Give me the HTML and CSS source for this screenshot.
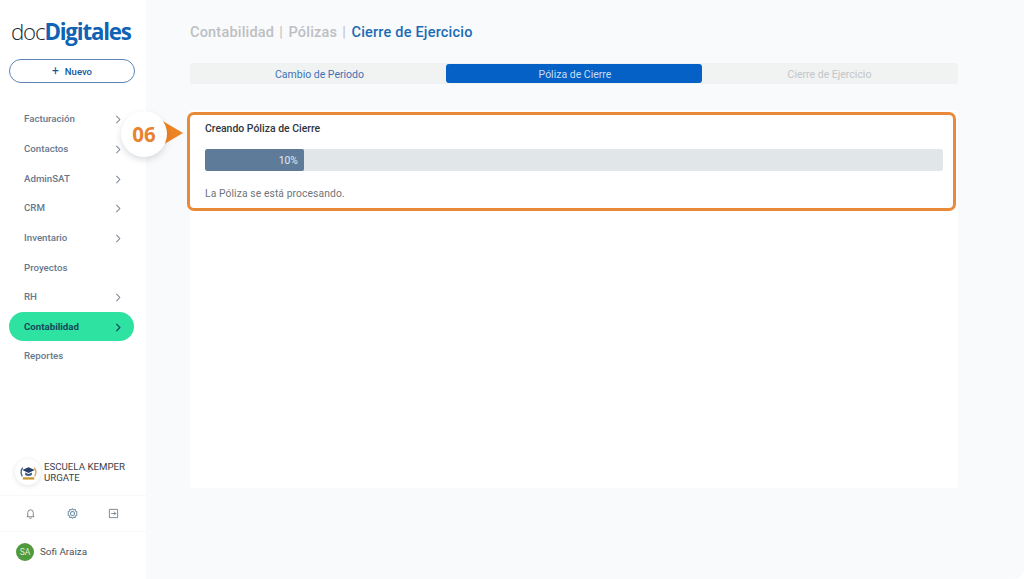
FILE: index.html
```html
<!DOCTYPE html>
<html lang="es">
<head>
<meta charset="utf-8">
<title>docDigitales</title>
<link rel="stylesheet" href="styles.css">
</head>
<body>
<div class="app">
  <aside class="sidebar">
    <div class="logo"><span class="logo-doc">doc</span><span class="logo-dig">Digitales</span></div>
    <button class="new-btn"><span class="plus">+</span>Nuevo</button>
    <nav class="nav">
      <a class="nav-item">Facturación<svg class="chev" viewBox="0 0 8 12"><path d="M2.200 2 6 6 2.200 10"/></svg></a>
      <a class="nav-item">Contactos<svg class="chev" viewBox="0 0 8 12"><path d="M2.200 2 6 6 2.200 10"/></svg></a>
      <a class="nav-item">AdminSAT<svg class="chev" viewBox="0 0 8 12"><path d="M2.200 2 6 6 2.200 10"/></svg></a>
      <a class="nav-item">CRM<svg class="chev" viewBox="0 0 8 12"><path d="M2.200 2 6 6 2.200 10"/></svg></a>
      <a class="nav-item">Inventario<svg class="chev" viewBox="0 0 8 12"><path d="M2.200 2 6 6 2.200 10"/></svg></a>
      <a class="nav-item">Proyectos</a>
      <a class="nav-item">RH<svg class="chev" viewBox="0 0 8 12"><path d="M2.200 2 6 6 2.200 10"/></svg></a>
      <a class="nav-item active">Contabilidad<svg class="chev" viewBox="0 0 8 12"><path d="M2.200 2 6 6 2.200 10"/></svg></a>
      <a class="nav-item">Reportes</a>
    </nav>
    <div class="side-bottom">
      <div class="company">
        <div class="company-logo">
          <svg viewBox="0 0 22 22" width="21" height="21">
            <path d="M4.500 15A8 8 0 0 1 5 6" fill="none" stroke="#3a5a8c" stroke-width="1.300"/>
            <path d="M17.500 15A8 8 0 0 0 17 6" fill="none" stroke="#d9a441" stroke-width="1.300"/>
            <path d="M4.500 8.500 11 5.500l6.500 3L11 11.500z" fill="#27406b"/>
            <path d="M7.500 11v2.500c2 1.500 5 1.500 7 0V11L11 12.500z" fill="#3a5a8c"/>
            <rect x="5" y="16" width="12" height="2.400" fill="#c9962f"/>
          </svg>
        </div>
        <div class="company-name">ESCUELA KEMPER URGATE</div>
      </div>
      <div class="tools">
        <svg class="tool" viewBox="0 0 12 12"><path d="M3 8.800V5a3 3 0 0 1 6 0v3.800l1 .7H2zM5 10.500a1 1 0 0 0 2 0"/></svg>
        <svg class="tool tool-blue" viewBox="0 0 12 12"><path d="M6 .8 7.200 2l1.700-.2.500 1.600 1.500.9L10.400 6l.5 1.700-1.500.9-.5 1.600-1.700-.2L6 11.200 4.800 10l-1.700.2-.5-1.600-1.500-.9L1.600 6l-.5-1.700 1.500-.9.500-1.600 1.700.2z"/><circle cx="6" cy="6" r="2.200"/></svg>
        <svg class="tool" viewBox="0 0 12 12"><path d="M1.500 1.500h9v9h-9zM3.500 6h5M6.500 4l2 2-2 2"/></svg>
      </div>
      <div class="user"><span class="avatar">SA</span><span class="user-name">Sofi Araiza</span></div>
    </div>
  </aside>
  <main class="main">
    <h1 class="crumbs"><span class="crumb">Contabilidad</span><span class="sep">|</span><span class="crumb">Pólizas</span><span class="sep">|</span><span class="crumb-current">Cierre de Ejercicio</span></h1>
    <div class="tabs">
      <div class="tab tab-link">Cambio de Periodo</div>
      <div class="tab tab-active">Póliza de Cierre</div>
      <div class="tab tab-off">Cierre de Ejercicio</div>
    </div>
    <section class="card">
      <div class="status">
        <h2 class="status-title">Creando Póliza de Cierre</h2>
        <div class="progress"><div class="progress-bar" style="width:13.4%">10%</div></div>
        <p class="status-text">La Póliza se está procesando.</p>
      </div>
      <div class="highlight"></div>
      <div class="arrow"></div>
      <div class="badge">06</div>
    </section>
  </main>
</div>
</body>
</html>
```
FILE: styles.css
```css
* { box-sizing: border-box; }
html, body { margin: 0; height: 100%; }
body { font-family: Roboto, "Liberation Sans", sans-serif; background: #fff; overflow: hidden; }
.app { display: flex; width: 1024px; height: 579px; }

.sidebar { width: 146px; flex: none; background: #fff; display: flex; flex-direction: column; box-shadow: 1px 0 3px rgba(30,50,80,.05); }
.logo { margin: 15px 0 0 11px; height: 33px; line-height: 33px; font-family: "Open Sans", sans-serif; font-size: 22.300px; letter-spacing: -1.180px; white-space: nowrap; }
.logo-doc { color: #22282d; font-weight: 300; }
.logo-dig { color: #0f62b4; font-weight: 700; }
.new-btn { margin: 11px 0 0 9px; width: 126px; height: 24px; border: 1px solid #5f85b3; border-radius: 12px; background: #fff; color: #12599f; font: 500 9.500px Roboto, sans-serif; display: flex; align-items: center; justify-content: center; padding: 0; }
.plus { font-size: 12px; margin-right: 6px; font-weight: 400; }
.nav { margin: 21px 0 0 9px; width: 125px; display: flex; flex-direction: column; }
.nav-item { height: 29.700px; padding: 0 12px 0 15px; border-radius: 15px; display: flex; align-items: center; justify-content: space-between; color: #66788d; font-size: 9.700px; font-weight: 500; }
.nav-item.active { background: #2ee2a1; color: #14495a; font-weight: 700; height: 29px; }
.chev { width: 8px; height: 11px; fill: none; stroke: #7b8794; stroke-width: 1.100; margin-top: 2px; }
.active .chev { stroke: #14495a; stroke-width: 1.400; }

.side-bottom { margin-top: auto; display: flex; flex-direction: column; }
.company { display: flex; align-items: center; margin: 0 0 4px 15px; height: 38px; }
.company-logo { width: 26px; height: 26px; border-radius: 50%; background: #fff; box-shadow: 0 1px 5px rgba(40,50,70,.14); display: flex; align-items: center; justify-content: center; flex: none; }
.company-name { margin-left: 3px; width: 95px; font-size: 9.700px; line-height: 11.500px; color: #3b4248; }
.tools { display: flex; justify-content: space-between; padding: 0 27px 0 25px; height: 37px; align-items: center; border-top: 1px solid #f8f9fa; border-bottom: 1px solid #f8f9fa; }
.tool { width: 11px; height: 11px; fill: none; stroke: #68727c; stroke-width: .9; }
.tool-blue { stroke: #6f8fa5; stroke-width: 1.100; }
.user { display: flex; align-items: center; height: 39px; padding: 0 0 0 16px; margin-bottom: 8px; }
.avatar { width: 18px; height: 18px; border-radius: 50%; background: #4f9a3c; color: #dfeedd; font-size: 8.500px; display: flex; align-items: center; justify-content: center; }
.user-name { margin-left: 6px; font-size: 9.900px; color: #4a5259; }

.main { flex: 1; padding: 0 66px 0 44px; display: flex; flex-direction: column; background: #f9fafb; border-bottom-right-radius: 10px; position: relative; }
.crumbs { margin: 23px 0 0; height: 20px; font-size: 14.500px; line-height: 20px; font-weight: 500; display: flex; letter-spacing: .2px; }
.crumb { color: #bdc0c3; }
.sep { color: #bdc0c3; font-weight: 400; margin: 0 5.500px 0 5px; }
.crumb-current { color: #1b6cb5; }
.tabs { margin-top: 20px; display: flex; align-items: center; gap: 1px; background: #f1f2f2; height: 21px; border-radius: 3px; width: 768px; }
.tab { display: flex; align-items: center; justify-content: center; font-size: 10.500px; border-radius: 3px; padding-top: 1px; }
.tab-link { color: #3c74b4; flex: 0 0 255px; padding-left: 4px; }
.tab-active { background: #0561c6; color: #c8ddf3; flex: 0 0 256px; height: 19px; padding-left: 2px; }
.tab-off { color: #c3c6c9; flex: 1; padding-right: 2px; }

.card { position: relative; margin-top: 26px; width: 768px; height: 378px; background: #fff; border-radius: 3px; }
.status { padding: 12px 15px 0; }
.status-title { margin: 0; font-size: 10.450px; line-height: 13px; font-weight: 500; color: #2f363c; }
.progress { margin-top: 14px; height: 22px; width: 738px; background: #e1e6e9; border-radius: 2px; overflow: hidden; }
.progress-bar { height: 22px; background: #5e7b99; color: #e3e9ef; font-size: 10.300px; line-height: 24px; text-align: right; padding-right: 6px; border-radius: 2px; }
.status-text { margin: 16px 0 0; font-size: 10.300px; line-height: 13px; color: #6e757b; letter-spacing: .1px; }

.highlight { position: absolute; left: -3px; top: 2px; width: 769px; height: 99px; border: 3px solid #e98a38; border-radius: 7px; }
.badge { position: absolute; left: -69px; top: 1px; width: 46px; height: 46px; border-radius: 50%; background: #fff; box-shadow: 0 3px 6px rgba(40,50,70,.16); color: #e8832f; font: 700 20.500px/46px "Open Sans", sans-serif; text-align: center; }
.arrow { position: absolute; left: -29px; top: 10px; width: 0; height: 0; border-left: 22px solid #ee8326; border-top: 13.500px solid transparent; border-bottom: 13.500px solid transparent; }
```
